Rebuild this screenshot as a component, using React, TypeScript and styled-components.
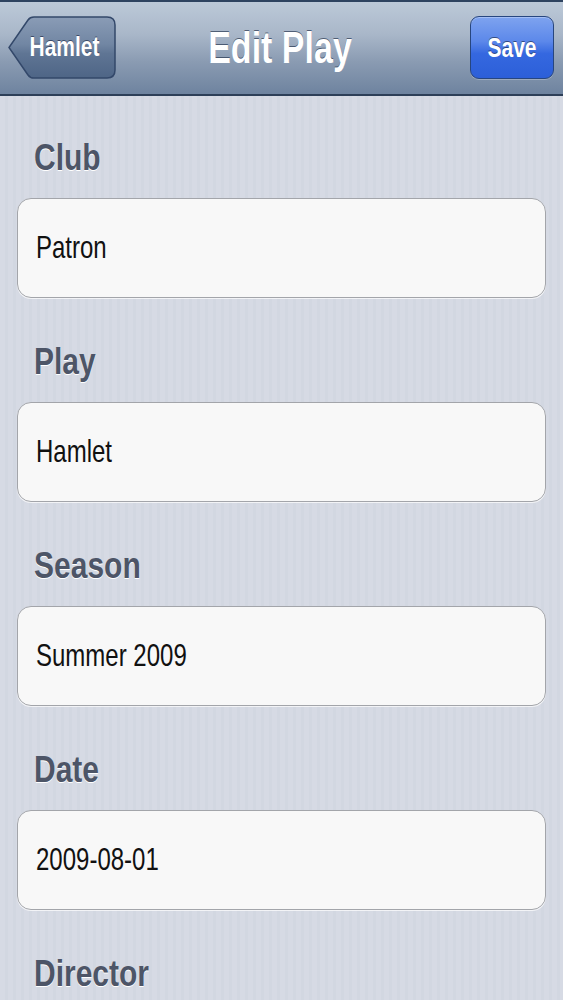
import React from 'react';
import styled, { createGlobalStyle } from 'styled-components';

const GlobalStyle = createGlobalStyle`
  html, body {
    margin: 0;
    padding: 0;
    background: #d5d9e3;
  }
  body {
    font-family: "Liberation Sans", Arial, Helvetica, sans-serif;
  }
`;

const Screen = styled.div`
  width: 563px;
  height: 1000px;
  overflow: hidden;
  background-color: #d5d9e3;
  background-image: repeating-linear-gradient(
    90deg,
    #d6dae4 0px,
    #d6dae4 5px,
    #d2d7e1 5px,
    #d2d7e1 8px
  );
`;

// Navigation bar
const NavBar = styled.header`
  height: 92px;
  border-top: 2px solid #2e4360;
  border-bottom: 2px solid #2d3f58;
  background: linear-gradient(to bottom, #bcc9d8 0%, #a9b7c9 35%, #8a9bb2 65%, #6e839f 100%);
  display: flex;
  align-items: center;
  justify-content: space-between;
  padding: 0 9px 0 8px;
  position: relative;
`;

const Title = styled.h1`
  position: absolute;
  left: 0;
  right: 0;
  top: 0;
  bottom: 0;
  margin: 0;
  display: flex;
  align-items: center;
  justify-content: center;
  font-size: 34px;
  font-weight: bold;
  color: #ffffff;
  text-shadow: 0 -1px 0 rgba(40, 55, 80, 0.7);
  transform: scaleY(1.28);
  pointer-events: none;
  margin-left: -3px;
`;

const BackButton = styled.button`
  position: relative;
  width: 108px;
  height: 63px;
  margin-top: -2px;
  border: none;
  background: transparent;
  padding: 0 0 0 5px;
  cursor: pointer;
  z-index: 1;
`;

const BackShape = styled.svg`
  position: absolute;
  left: 0;
  top: 0;
  width: 108px;
  height: 63px;
`;

const ButtonLabel = styled.span`
  position: relative;
  display: inline-block;
  font-family: "Liberation Sans", Arial, sans-serif;
  font-size: 21px;
  font-weight: bold;
  color: #ffffff;
  text-shadow: 0 -1px 0 rgba(20, 30, 60, 0.6);
  transform: scaleY(1.28);
`;

const SaveButton = styled.button`
  width: 84px;
  height: 63px;
  margin-top: -1px;
  border: 1.5px solid #27467f;
  border-radius: 9px;
  background: linear-gradient(to bottom, #7ea3ef 0%, #5c88ea 40%, #3568e0 60%, #2c5fd8 100%);
  box-shadow: 0 1px 0 rgba(255, 255, 255, 0.25), inset 0 1px 0 rgba(255, 255, 255, 0.3);
  padding: 0;
  cursor: pointer;
  z-index: 1;
`;

// Form
const Form = styled.main`
  display: flex;
  flex-direction: column;
  gap: 48px;
  padding: 46px 17px 0 17px;
`;

const Group = styled.section`
  display: flex;
  flex-direction: column;
  gap: 26px;
`;

const Label = styled.div`
  height: 30px;
  line-height: 30px;
  padding-left: 17px;
  font-size: 30px;
  font-weight: bold;
  color: #4d5567;
  text-shadow: 0 1px 0 #ffffff;
  transform: scaleY(1.26);
`;

const Field = styled.div`
  box-sizing: border-box;
  height: 100px;
  border: 1.5px solid #a3a5aa;
  border-radius: 14px;
  background: #f8f8f8;
  box-shadow: 0 1px 0 rgba(255, 255, 255, 0.7);
  display: flex;
  align-items: center;
  padding-left: 18px;
`;

const Value = styled.span`
  display: inline-block;
  font-size: 24px;
  color: #111111;
  transform: scaleY(1.27);
`;

const fields = [
  { label: 'Club', value: 'Patron' },
  { label: 'Play', value: 'Hamlet' },
  { label: 'Season', value: 'Summer 2009' },
  { label: 'Date', value: '2009-08-01' },
  { label: 'Director', value: '' },
];

export default function App() {
  return (
    <Screen>
      <GlobalStyle />
      <NavBar>
        <BackButton>
          <BackShape viewBox="0 0 108 63">
            <defs>
              <linearGradient id="backGrad" x1="0" y1="0" x2="0" y2="1">
                <stop offset="0" stopColor="#8a9cb6" />
                <stop offset="0.45" stopColor="#7186a3" />
                <stop offset="0.6" stopColor="#5f7594" />
                <stop offset="1" stopColor="#4e6586" />
              </linearGradient>
            </defs>
            <path
              d="M 26 1 L 99 1 Q 107 1 107 9 L 107 54 Q 107 62 99 62 L 26 62 Q 22 62 20 59 L 1 31.5 L 20 4 Q 22 1 26 1 Z"
              fill="url(#backGrad)"
              stroke="#33486a"
              strokeWidth="1.5"
            />
          </BackShape>
          <ButtonLabel>Hamlet</ButtonLabel>
        </BackButton>
        <Title>Edit Play</Title>
        <SaveButton>
          <ButtonLabel>Save</ButtonLabel>
        </SaveButton>
      </NavBar>
      <Form>
        {fields.map((f) => (
          <Group key={f.label}>
            <Label>{f.label}</Label>
            <Field>
              <Value>{f.value}</Value>
            </Field>
          </Group>
        ))}
      </Form>
    </Screen>
  );
}
